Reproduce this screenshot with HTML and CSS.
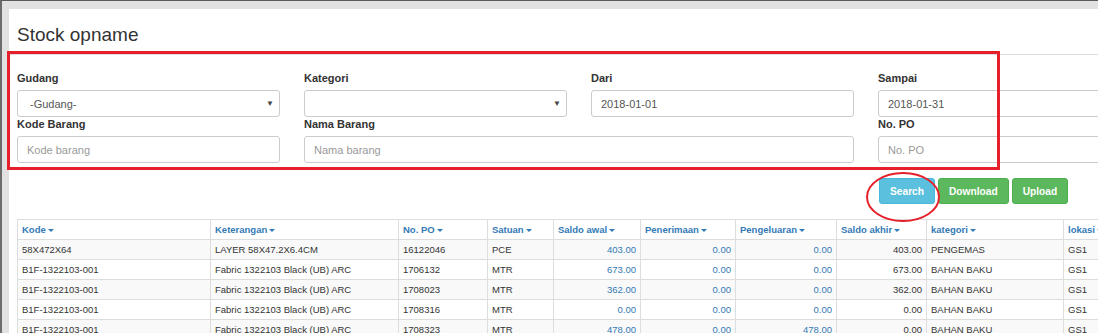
FILE: index.html
```
<!DOCTYPE html>
<html lang="id">
<head>
    <meta charset="UTF-8">
    <meta name="viewport" content="width=device-width, initial-scale=1.0">
    <title>Stock opname</title>
    <link rel="stylesheet" href="styles.css">
</head>
<body>
    <div class="frame">
        <div class="panel">
            <h1 class="page-title">Stock opname</h1>

            <!-- Filter -->
            <div class="filter">
                <div class="field">
                    <label>Gudang</label>
                    <div class="select-box"><span>-Gudang-</span><span class="arrow">▼</span></div>
                </div>
                <div class="field">
                    <label>Kategori</label>
                    <div class="select-box"><span></span><span class="arrow">▼</span></div>
                </div>
                <div class="field">
                    <label>Dari</label>
                    <input type="text" class="input" value="2018-01-01">
                </div>
                <div class="field">
                    <label>Sampai</label>
                    <input type="text" class="input" value="2018-01-31">
                </div>
                <div class="field">
                    <label>Kode Barang</label>
                    <input type="text" class="input" placeholder="Kode barang">
                </div>
                <div class="field wide">
                    <label>Nama Barang</label>
                    <input type="text" class="input" placeholder="Nama barang">
                </div>
                <div class="field">
                    <label>No. PO</label>
                    <input type="text" class="input" placeholder="No. PO">
                </div>
                <div class="actions">
                    <button class="btn btn-info">Search</button>
                    <button class="btn btn-success">Download</button>
                    <button class="btn btn-success">Upload</button>
                </div>
            </div>

            <!-- Tabel -->
            <table class="grid">
                <colgroup>
                    <col style="width: 193px">
                    <col style="width: 188px">
                    <col style="width: 89px">
                    <col style="width: 66px">
                    <col style="width: 87px">
                    <col style="width: 95px">
                    <col style="width: 101px">
                    <col style="width: 90px">
                    <col style="width: 137px">
                    <col style="width: 80px">
                </colgroup>
                <thead>
                    <tr>
                        <th>Kode<span class="caret"></span></th>
                        <th>Keterangan<span class="caret"></span></th>
                        <th>No. PO<span class="caret"></span></th>
                        <th>Satuan<span class="caret"></span></th>
                        <th>Saldo awal<span class="caret"></span></th>
                        <th>Penerimaan<span class="caret"></span></th>
                        <th>Pengeluaran<span class="caret"></span></th>
                        <th>Saldo akhir<span class="caret"></span></th>
                        <th>kategori<span class="caret"></span></th>
                        <th>lokasi<span class="caret"></span></th>
                    </tr>
                </thead>
                <tbody>
                    <tr>
                        <td>58X472X64</td><td>LAYER 58X47.2X6.4CM</td><td>16122046</td><td>PCE</td>
                        <td class="num link">403.00</td><td class="num link">0.00</td><td class="num link">0.00</td>
                        <td class="num">403.00</td><td>PENGEMAS</td><td>GS1</td>
                    </tr>
                    <tr>
                        <td>B1F-1322103-001</td><td>Fabric 1322103 Black (UB) ARC</td><td>1706132</td><td>MTR</td>
                        <td class="num link">673.00</td><td class="num link">0.00</td><td class="num link">0.00</td>
                        <td class="num">673.00</td><td>BAHAN BAKU</td><td>GS1</td>
                    </tr>
                    <tr>
                        <td>B1F-1322103-001</td><td>Fabric 1322103 Black (UB) ARC</td><td>1708023</td><td>MTR</td>
                        <td class="num link">362.00</td><td class="num link">0.00</td><td class="num link">0.00</td>
                        <td class="num">362.00</td><td>BAHAN BAKU</td><td>GS1</td>
                    </tr>
                    <tr>
                        <td>B1F-1322103-001</td><td>Fabric 1322103 Black (UB) ARC</td><td>1708316</td><td>MTR</td>
                        <td class="num link">0.00</td><td class="num link">0.00</td><td class="num link">0.00</td>
                        <td class="num">0.00</td><td>BAHAN BAKU</td><td>GS1</td>
                    </tr>
                    <tr>
                        <td>B1F-1322103-001</td><td>Fabric 1322103 Black (UB) ARC</td><td>1708323</td><td>MTR</td>
                        <td class="num link">478.00</td><td class="num link">0.00</td><td class="num link">478.00</td>
                        <td class="num">0.00</td><td>BAHAN BAKU</td><td>GS1</td>
                    </tr>
                </tbody>
            </table>
        </div>

        <!-- Anotasi merah -->
        <div class="mark-box"></div>
        <svg class="mark-ring" width="80" height="56" viewBox="0 0 80 56">
            <ellipse cx="40" cy="28" rx="36" ry="24" fill="none" stroke="#e5202a" stroke-width="2"/>
        </svg>
    </div>
</body>
</html>
```
FILE: styles.css
```
/* Umum */
html, body {
    margin: 0;
    padding: 0;
    height: 100%;
    overflow: hidden;
}

body {
    font-family: "Liberation Sans", Arial, sans-serif;
    color: #333;
    background-color: #e1e1e1;
}

.frame {
    position: relative;
    height: 100%;
    box-sizing: border-box;
    border-top: 1px solid #5a5a5a;
    border-left: 2px solid #6b6b6b;
    padding: 8px 0 0 7px;
    background-color: #e1e1e1;
}

.panel {
    background-color: #fff;
    height: 100%;
    padding: 0 0 0 8px;
    overflow: hidden;
}

.page-title {
    margin: 0 0 0 -8px;
    padding: 14px 0 7px 8px;
    font-size: 19px;
    line-height: 24px;
    font-weight: normal;
    color: #333;
    border-bottom: 1px solid #ddd;
}

/* Filter */
.filter {
    display: grid;
    grid-template-columns: repeat(4, 263px);
    column-gap: 24px;
    margin-top: 16px;
}

.field label {
    display: block;
    font-size: 11px;
    font-weight: bold;
    line-height: 15px;
    margin-bottom: 4px;
}

.field.wide {
    grid-column: span 2;
}

.select-box,
.input {
    display: flex;
    align-items: center;
    width: 100%;
    height: 27px;
    box-sizing: border-box;
    border: 1px solid #ccc;
    border-radius: 3px;
    background-color: #fff;
    font-family: inherit;
    font-size: 11px;
    color: #555;
}

.select-box {
    justify-content: space-between;
    padding: 0 5px 0 12px;
}

.select-box .arrow {
    font-size: 8px;
    color: #444;
}

.input {
    padding: 0 9px;
    outline: none;
}

.input::placeholder {
    color: #999;
}

.actions {
    grid-column: 4;
    display: flex;
    gap: 3px;
    margin-top: 15px;
    margin-left: 1px;
}

.btn {
    height: 26px;
    padding: 0 10px;
    border: 1px solid transparent;
    border-radius: 3px;
    font-family: inherit;
    font-size: 10.2px;
    font-weight: bold;
    color: #fff;
    cursor: pointer;
}

.btn-info {
    background-color: #5bc0de;
    border-color: #46b8da;
}

.btn-success {
    background-color: #5cb85c;
    border-color: #4cae4c;
}

/* Tabel */
.grid {
    table-layout: fixed;
    width: 1126px;
    border-collapse: collapse;
    margin-top: 15px;
    font-size: 9.5px;
}

.grid th,
.grid td {
    height: 20px;
    box-sizing: border-box;
    padding: 0 4px 0 4px;
    border: 1px solid #ddd;
    text-align: left;
    vertical-align: middle;
    white-space: nowrap;
    overflow: hidden;
}

.grid th {
    font-weight: bold;
    color: #337ab7;
}

.grid tbody tr:nth-child(odd) {
    background-color: #f9f9f9;
}

.grid td.num {
    text-align: right;
}

.grid td.link {
    color: #337ab7;
}

.caret {
    display: inline-block;
    width: 0;
    height: 0;
    margin-left: 2px;
    vertical-align: middle;
    border-top: 3px solid #337ab7;
    border-left: 3px solid transparent;
    border-right: 3px solid transparent;
}

/* Anotasi */
.mark-box {
    position: absolute;
    left: 5px;
    top: 50px;
    width: 987px;
    height: 113px;
    border: 3px solid #e5202a;
}

.mark-ring {
    position: absolute;
    left: 861px;
    top: 168px;
}
```
